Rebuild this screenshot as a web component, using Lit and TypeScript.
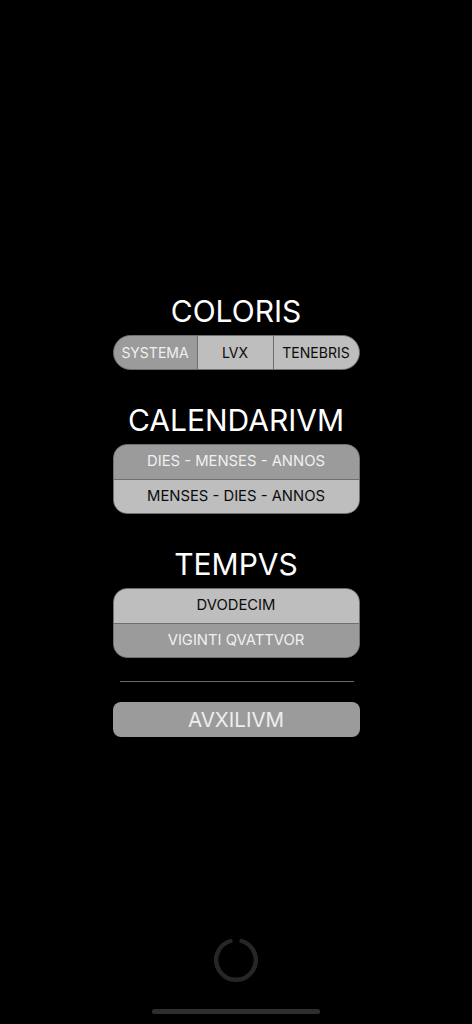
import { LitElement, html, css } from "lit";
import { customElement } from "lit/decorators.js";

@customElement("app-root")
export class AppRoot extends LitElement {
  static styles = css`
    :host {
      display: block;
      width: 472px;
      height: 1024px;
      background: #000;
      font-family: "Inter", "Liberation Sans", sans-serif;
      overflow: hidden;
    }
    .page {
      height: 1024px;
      box-sizing: border-box;
      display: flex;
      flex-direction: column;
      align-items: center;
      padding-top: 293px;
    }
    .panel {
      width: 247px;
      display: flex;
      flex-direction: column;
    }
    h2 {
      margin: 0;
      height: 36px;
      line-height: 36px;
      font-size: 30px;
      font-weight: 400;
      color: #fff;
      text-align: center;
      white-space: nowrap;
      margin-bottom: 6px;
    }
    .group {
      box-sizing: border-box;
      border: 1px solid #6f6f6f;
      overflow: hidden;
      display: flex;
      background: #6f6f6f;
      gap: 1px;
      margin-bottom: 32px;
    }
    .row { flex-direction: row; height: 35px; border-radius: 17.5px; }
    .col { flex-direction: column; height: 70px; border-radius: 14px; }
    .opt {
      display: flex;
      align-items: center;
      justify-content: center;
      box-sizing: border-box;
      font-size: 14.8px;
      background: #bebebe;
      color: #0c0c0c;
      white-space: nowrap;
    }
    .opt.on { background: #9b9b9b; color: #f0f0f0; }
    .col .opt:nth-child(1) { flex: 0 0 34px; padding-bottom: 2px; }
    .col .opt:nth-child(2) { flex: 0 0 33px; padding-bottom: 1px; }
    .row .opt { font-size: 14px; padding-bottom: 1px; }
    .row .opt:nth-child(1) { flex: 0 0 83px; }
    .row .opt:nth-child(2) { flex: 0 0 75px; }
    .row .opt:nth-child(3) { flex: 1 1 0; }
    .last { margin-bottom: 0; }
    hr {
      width: 234px;
      margin: 23px 6px 20px 7px;
      border: 0;
      height: 1px;
      background: #6a6a6a;
    }
    .help {
      height: 35px;
      border-radius: 8px;
      background: #9b9b9b;
      color: #eee;
      font-size: 20.5px;
      display: flex;
      align-items: center;
      justify-content: center;
    }
    .spin { display: block; margin-top: auto; }
    .home {
      width: 168px;
      height: 5px;
      border-radius: 3px;
      background: #2e2e2e;
      margin: 26px 0 10px;
    }
  `;

  render() {
    return html`
      <div class="page">
        <div class="panel">
          <h2>COLORIS</h2>
          <div class="group row">
            <div class="opt on">SYSTEMA</div>
            <div class="opt">LVX</div>
            <div class="opt">TENEBRIS</div>
          </div>
          <h2>CALENDARIVM</h2>
          <div class="group col">
            <div class="opt on">DIES - MENSES - ANNOS</div>
            <div class="opt">MENSES - DIES - ANNOS</div>
          </div>
          <h2>TEMPVS</h2>
          <div class="group col last">
            <div class="opt">DVODECIM</div>
            <div class="opt on">VIGINTI QVATTVOR</div>
          </div>
          <hr />
          <div class="help">AVXILIVM</div>
        </div>
        <svg class="spin" width="46" height="46" viewBox="0 0 46 46">
          <path d="M17.5 4 A19.8 19.8 0 1 0 28.5 4" fill="none" stroke="#262626" stroke-width="4.4" stroke-linecap="round"/>
        </svg>
        <div class="home"></div>
      </div>
    `;
  }
}
